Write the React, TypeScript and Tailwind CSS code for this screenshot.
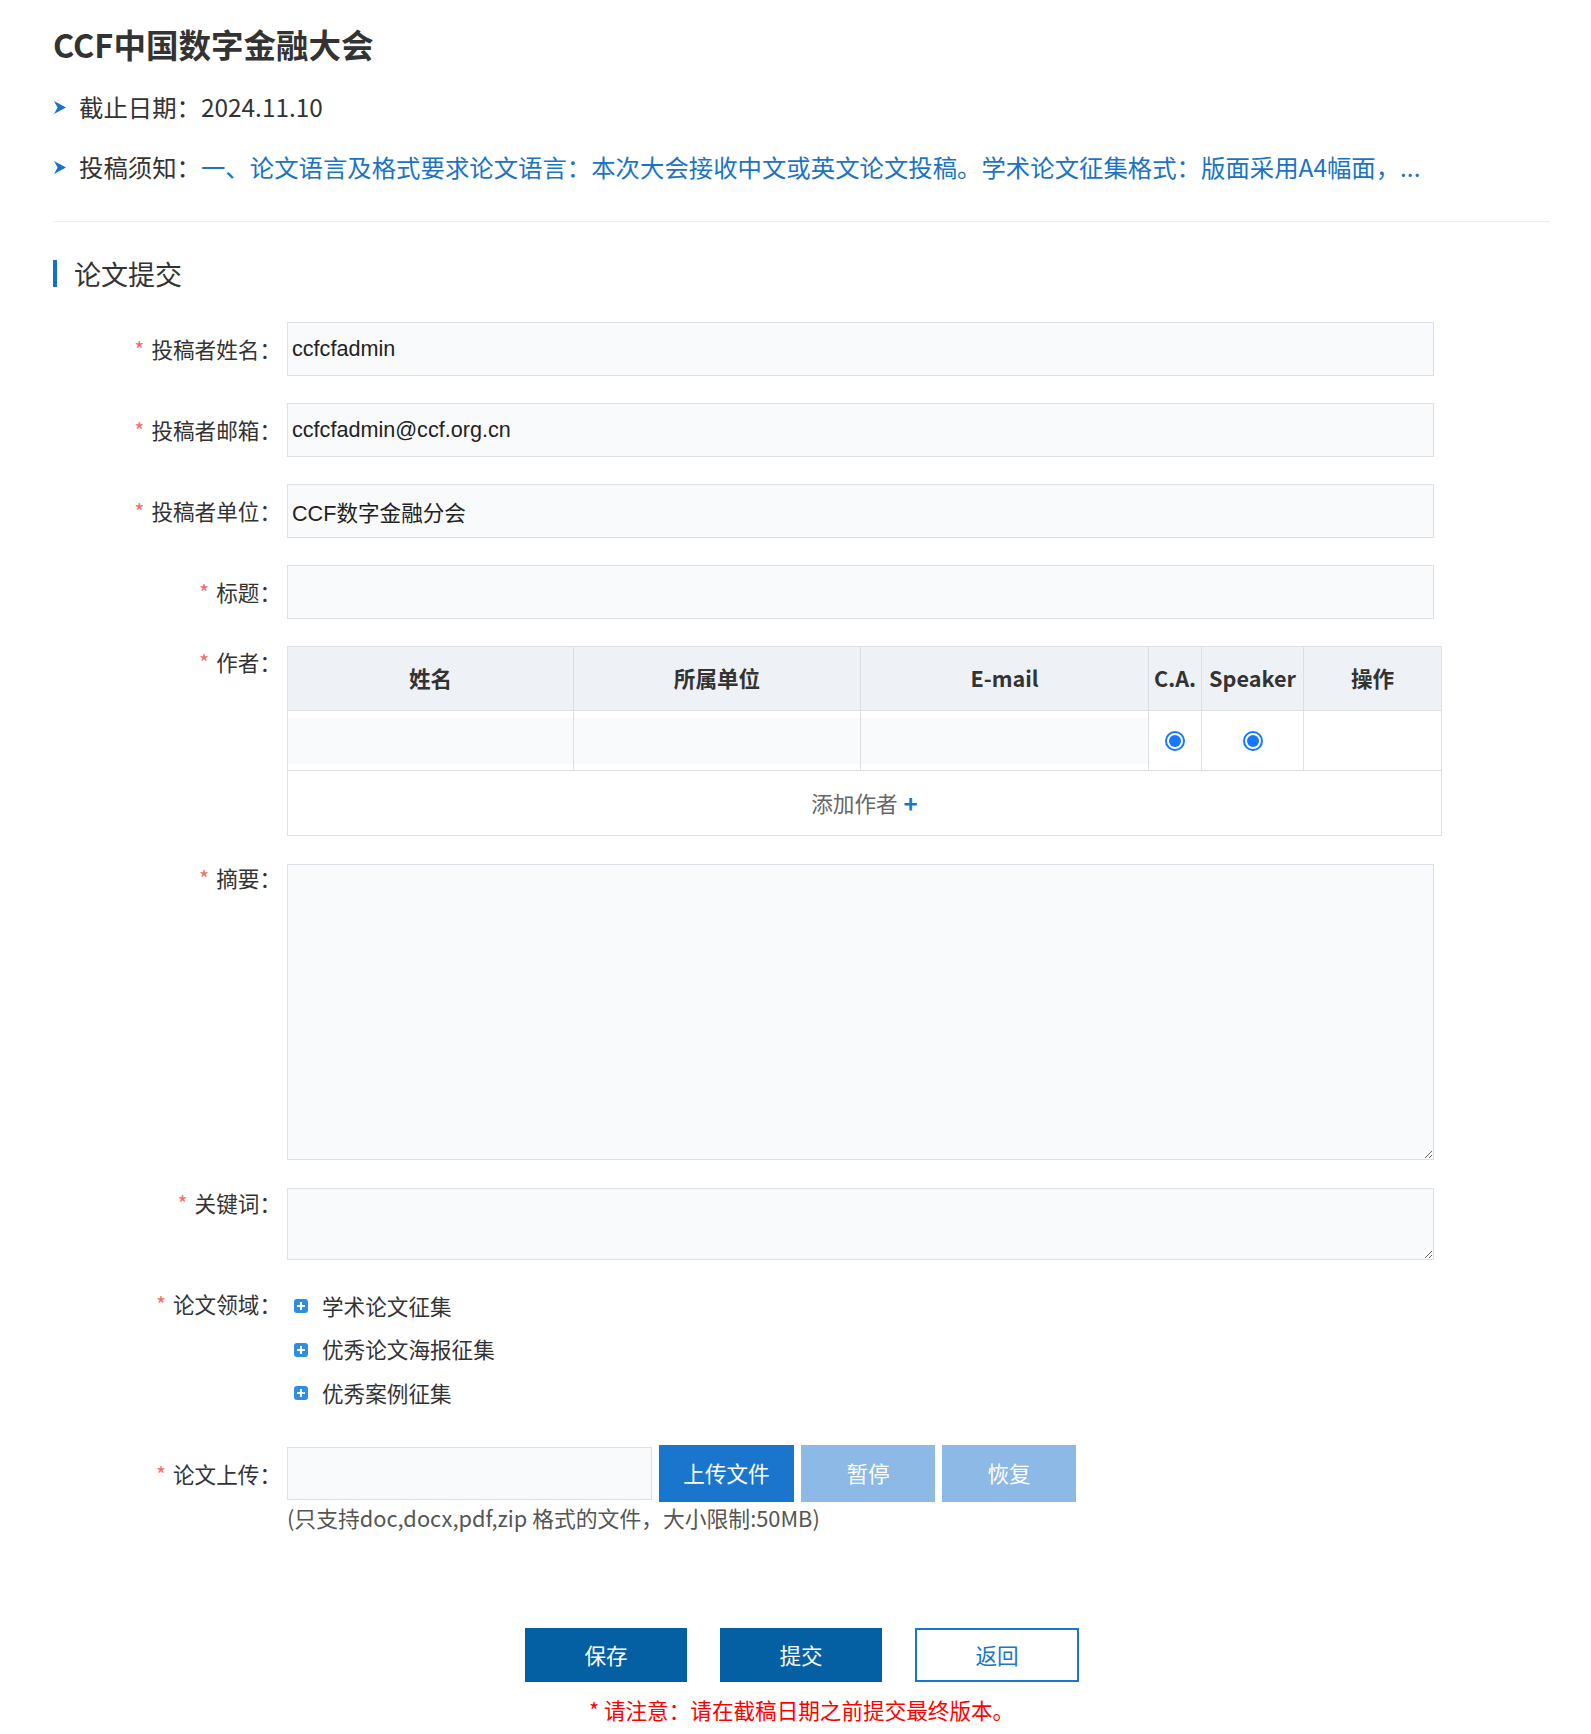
import React from "react";

const Arrow = () => (
  <svg width="12" height="13" viewBox="0 0 12 13" className="ml-[1px] mr-[13px] shrink-0">
    <path d="M0 0 L12 6.5 L0 13 L3.6 6.5 Z" fill="#1a73c4" />
  </svg>
);

const Label = ({ text, lh = "leading-[30px]" }: { text: string; lh?: string }) => (
  <div className={`w-[228px] shrink-0 text-right text-[21.6px] text-[#333] ${lh}`}>
    <span className="mr-[7px] text-[#f56c6c]">*</span>
    {text}：
  </div>
);

const TextInput = ({ value }: { value?: string }) => (
  <input
    readOnly
    defaultValue={value}
    className="block h-[54px] w-[1147px] border border-[#dcdfe6] bg-[#f9fafc] pl-[4px] font-['Liberation_Sans','Noto_Sans_CJK_SC',sans-serif] text-[21.6px] text-[#222] outline-none"
  />
);

const Radio = () => (
  <span className="flex h-[20px] w-[20px] items-center justify-center rounded-full border-2 border-[#1677ff] bg-white">
    <span className="h-[12px] w-[12px] rounded-full bg-[#1677ff]" />
  </span>
);

const Plus = () => (
  <span className="relative mr-[14px] h-[14px] w-[14px] shrink-0 rounded-[3px] bg-[#2e8ee0]">
    <span className="absolute left-[3px] top-[6px] h-[2px] w-[8px] bg-white" />
    <span className="absolute left-[6px] top-[3px] h-[8px] w-[2px] bg-white" />
  </span>
);

export default function App() {
  const head = "flex h-[64px] items-center justify-center border-r border-b border-[#dcdfe6] bg-[#eef1f5] text-[21.6px] font-bold text-[#333]";
  const cellIn = "h-[60px] border-r border-b border-[#dcdfe6] pt-[7px]";
  const cellR = "flex h-[60px] items-center justify-center border-r border-b border-[#dcdfe6]";
  return (
    <div className="min-h-screen bg-white font-['Noto_Sans_CJK_SC',sans-serif] text-[#333]">
      <div className="ml-[53px] w-[1497px] pb-[10px]">
        <h1 className="pt-[22px] text-[32.5px] font-bold leading-[44px] text-[#333]">CCF中国数字金融大会</h1>
        <div className="mt-[23px] flex h-[36px] items-center text-[24.4px] leading-[36px] text-[#333]">
          <Arrow />
          <span>截止日期：2024.11.10</span>
        </div>
        <div className="mt-[24px] flex h-[36px] items-center whitespace-nowrap text-[24.4px] leading-[36px] text-[#333]">
          <Arrow />
          <span>投稿须知：</span>
          <span className="text-[#1a73c4]">一、论文语言及格式要求论文语言：本次大会接收中文或英文论文投稿。学术论文征集格式：版面采用A4幅面，...</span>
        </div>
        <div className="mt-[36px] border-t border-[#eeeeee]" />
        <div className="mt-[38px] flex h-[27px] items-center">
          <span className="h-[27px] w-[4px] bg-[#1570c9]" />
          <span className="ml-[17px] text-[27px] leading-[27px] text-[#333]">论文提交</span>
        </div>

        <div className="mt-[35px] flex flex-col">
          <div className="flex items-center gap-[6px]">
            <Label text="投稿者姓名" />
            <TextInput value="ccfcfadmin" />
          </div>
          <div className="mt-[27px] flex items-center gap-[6px]">
            <Label text="投稿者邮箱" />
            <TextInput value="ccfcfadmin@ccf.org.cn" />
          </div>
          <div className="mt-[27px] flex items-center gap-[6px]">
            <Label text="投稿者单位" />
            <TextInput value="CCF数字金融分会" />
          </div>
          <div className="mt-[27px] flex items-center gap-[6px]">
            <Label text="标题" />
            <TextInput value="" />
          </div>

          <div className="mt-[27px] flex items-start gap-[6px]">
            <Label text="作者" lh="leading-[32px]" />
            <div className="w-[1155px] border-l border-t border-[#dcdfe6]">
              <div className="grid grid-cols-[286px_287px_288px_53px_102px_138px]">
                <div className={head}>姓名</div>
                <div className={head}>所属单位</div>
                <div className={head}>E-mail</div>
                <div className={head}>C.A.</div>
                <div className={head}>Speaker</div>
                <div className={head}>操作</div>
                <div className={cellIn}><div className="h-[46px] bg-[#f9fafc]" /></div>
                <div className={cellIn}><div className="h-[46px] bg-[#f9fafc]" /></div>
                <div className={cellIn}><div className="h-[46px] bg-[#f9fafc]" /></div>
                <div className={cellR}><Radio /></div>
                <div className={cellR}><Radio /></div>
                <div className={cellR} />
                <div className="col-span-6 flex h-[65px] items-center justify-center border-r border-b border-[#dcdfe6] text-[21.6px] text-[#666]">
                  添加作者
                  <span className="ml-[6px] text-[24px] font-bold text-[#1a76cd]">+</span>
                </div>
              </div>
            </div>
          </div>

          <div className="mt-[28px] flex items-start gap-[6px]">
            <Label text="摘要" lh="leading-[28px]" />
            <textarea readOnly className="block h-[296px] w-[1147px] border border-[#dcdfe6] bg-[#f9fafc] outline-none" />
          </div>
          <div className="mt-[28px] flex items-start gap-[6px]">
            <Label text="关键词" lh="leading-[30px]" />
            <textarea readOnly className="block h-[72px] w-[1147px] border border-[#dcdfe6] bg-[#f9fafc] outline-none" />
          </div>

          <div className="mt-[29px] flex items-start gap-[6px]">
            <Label text="论文领域" lh="leading-[30px]" />
            <div className="flex flex-col gap-[9.5px] pl-[7px]">
              {["学术论文征集", "优秀论文海报征集", "优秀案例征集"].map((t) => (
                <div key={t} className="flex h-[34px] items-center text-[21.6px] text-[#333]">
                  <Plus />
                  {t}
                </div>
              ))}
            </div>
          </div>

          <div className="mt-[35px] flex items-center gap-[6px]">
            <Label text="论文上传" />
            <div className="flex items-center">
              <div className="h-[53px] w-[365px] border border-[#dcdfe6] bg-[#f9fafc]" />
              <button className="ml-[7px] h-[57px] w-[135px] bg-[#1a76cd] text-[21.6px] text-white">上传文件</button>
              <button className="ml-[7px] h-[57px] w-[134px] bg-[#8cb9e5] text-[21.6px] text-white">暂停</button>
              <button className="ml-[7px] h-[57px] w-[134px] bg-[#8cb9e5] text-[21.6px] text-white">恢复</button>
            </div>
          </div>
          <div className="mt-[4px] pl-[234px] text-[21.8px] leading-[24px] text-[#555]">
            (只支持doc,docx,pdf,zip 格式的文件，大小限制:50MB)
          </div>
        </div>

        <div className="mt-[98px] flex pl-[472px]">
          <button className="h-[54px] w-[162px] bg-[#045fa3] text-[21.6px] text-white">保存</button>
          <button className="ml-[33px] h-[54px] w-[162px] bg-[#045fa3] text-[21.6px] text-white">提交</button>
          <button className="ml-[33px] h-[54px] w-[164px] border-2 border-[#1a76cd] bg-white text-[21.6px] text-[#1a76cd]">返回</button>
        </div>
        <div className="mt-[14px] pl-[536px] text-[21.6px] leading-[28px] text-[#ff0000]">
          * 请注意：请在截稿日期之前提交最终版本。
        </div>
      </div>
    </div>
  );
}
